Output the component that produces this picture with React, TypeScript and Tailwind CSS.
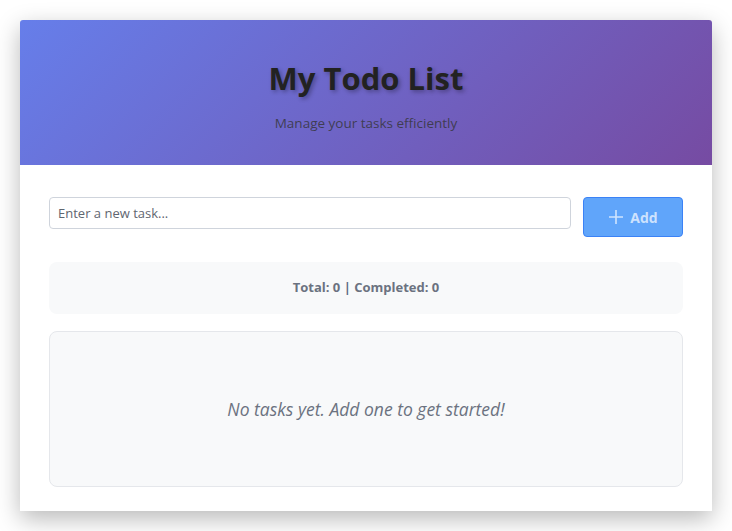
import { useState } from 'react';

export default function App() {
  const [task, setTask] = useState('');

  return (
    <div className="min-h-[531px] w-[732px] bg-white pt-5 pl-5 font-['Open_Sans','Noto_Sans',sans-serif]">
      <div className="w-[692px] overflow-hidden rounded-t-[3px] bg-white shadow-[0_8px_24px_rgba(0,0,0,0.28)]">
        {/* header */}
        <div className="flex h-[145px] flex-col items-center bg-[linear-gradient(135deg,#667eea_0%,#764ba2_100%)] pt-[38px]">
          <h1 className="text-[31px] font-bold leading-[40px] text-[#222] [text-shadow:2px_2px_4px_rgba(0,0,0,0.3)]">
            My Todo List
          </h1>
          <p className="mt-[15px] text-[13.5px] leading-[20px] text-[#333]/80">Manage your tasks efficiently</p>
        </div>

        {/* body */}
        <div className="px-[29px] pt-8 pb-6">
          <div className="flex items-start gap-3">
            <input
              value={task}
              onChange={e => setTask(e.target.value)}
              placeholder="Enter a new task..."
              className="h-8 flex-1 rounded-[4px] border border-[#cfd4dc] px-2 text-[13px] text-[#333] placeholder:text-[#5f6670] outline-none"
            />
            <button className="flex h-10 w-[100px] items-center justify-center gap-1.5 rounded-[4px] border border-[#3b82f6] bg-[#60a5fa] text-[14px] font-bold text-white/70">
              <svg width="16" height="16" viewBox="0 0 16 16" fill="none" stroke="currentColor" strokeWidth="1.6">
                <path d="M8 1v14M1 8h14" />
              </svg>
              Add
            </button>
          </div>

          <div className="mt-[25px] flex h-[52px] items-center justify-center rounded-lg bg-[#f8f9fa] text-[13px] font-bold text-[#6b7280]">
            Total: 0&nbsp;<span className="text-[#5b6b85]">|</span>&nbsp;Completed: 0
          </div>

          <div className="mt-[17px] flex h-[156px] items-center justify-center rounded-lg border border-[#e5e7eb] bg-[#f8f9fa]">
            <p className="text-[17.5px] italic text-[#6b7280]">No tasks yet. Add one to get started!</p>
          </div>
        </div>
      </div>
    </div>
  );
}
